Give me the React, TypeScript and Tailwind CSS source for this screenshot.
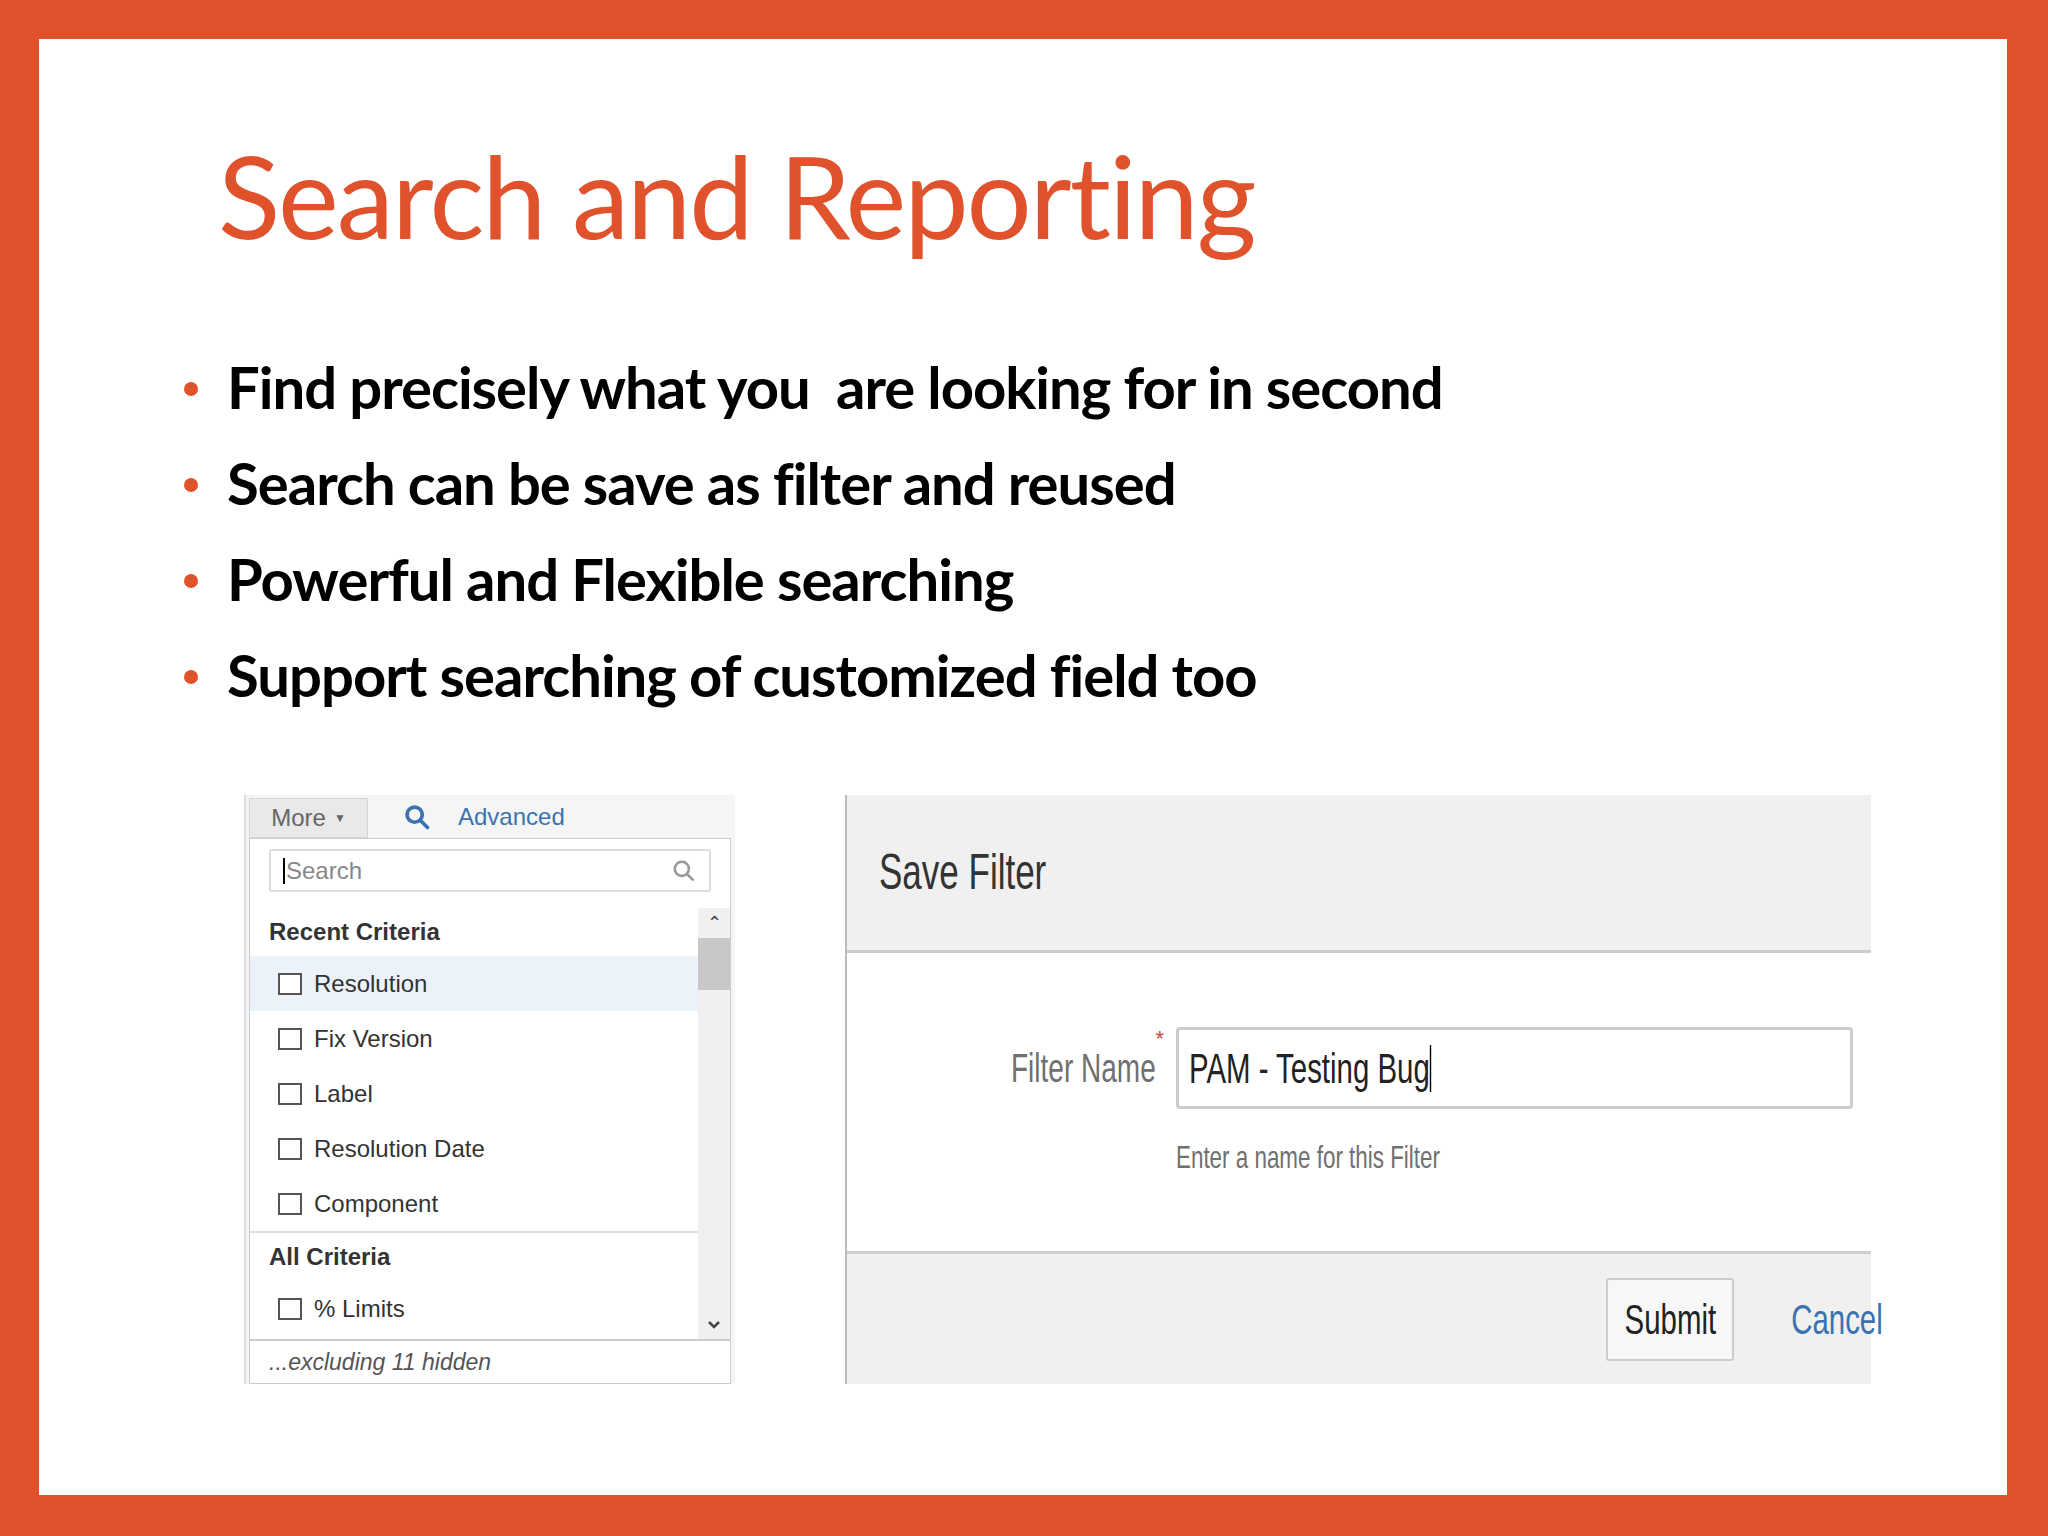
import React from "react";

const Check = () => <div className="w-[24px] h-[22px] border-2 border-[#555] bg-white shrink-0" />;

export default function App() {
  const rows = ["Fix Version", "Label", "Resolution Date", "Component"];
  return (
    <div className="w-[2048px] h-[1536px] bg-[#e0522c] pt-[39px] pl-[39px] pr-[41px] pb-[41px]">
      <div className="w-full h-full bg-white flex flex-col" >
        <div className="pt-[98px] pl-[179px] text-[#e0522c] text-[115px] leading-none tracking-[-2px]" style={{ fontFamily: "Lato, sans-serif" }}>
          Search and Reporting
        </div>
        <div className="mt-[86px] pl-[145px] flex flex-col" style={{ fontFamily: "Lato, sans-serif" }}>
          {["Find precisely what you  are looking for in second", "Search can be save as filter and reused", "Powerful and Flexible searching", "Support searching of customized field too"].map((t) => (
            <div key={t} className="h-[96px] flex items-center">
              <div className="w-[14px] h-[14px] rounded-full bg-[#e0522c] mr-[29px] mt-[6px]" />
              <span className="text-[58px] font-bold text-black whitespace-pre tracking-[-1px]">{t}</span>
            </div>
          ))}
        </div>
        <div className="mt-[73px] pl-[205px] flex gap-[110px]" style={{ fontFamily: "'Liberation Sans', Arial, sans-serif" }}>
          {/* left panel */}
          <div className="w-[491px] h-[589px] bg-[#f5f5f5] flex flex-col border-l-2 border-[#ddd]">
            <div className="h-[43px] flex items-end shrink-0">
              <div className="ml-[3px] w-[119px] h-[40px] bg-[#e9e9e9] border border-[#d5d5d5] flex items-center justify-center gap-2 text-[24px] text-[#666]">
                More <span className="text-[12px]">▼</span>
              </div>
              <div className="h-[43px] flex items-center ml-[35px]">
                <svg width="28" height="28" viewBox="0 0 24 24" fill="none" stroke="#3b73af" strokeWidth="3.2" strokeLinecap="round"><circle cx="10" cy="10" r="6.5" /><path d="M15 15l6 6" /></svg>
                <span className="ml-[27px] text-[24px] text-[#3b73af]">Advanced</span>
              </div>
            </div>
            <div className="ml-[3px] w-[482px] flex-1 bg-white border border-[#ccc] flex flex-col">
              <div className="px-[19px] pt-[10px]">
                <div className="h-[43px] border-2 border-[#ddd] rounded-[3px] flex items-center px-3 justify-between">
                  <span className="text-[24px] text-[#888] border-l-2 border-black pl-[1px] leading-[26px]">Search</span>
                  <svg width="26" height="26" viewBox="0 0 24 24" fill="none" stroke="#999" strokeWidth="2.4" strokeLinecap="round"><circle cx="10" cy="10" r="6.5" /><path d="M15 15l5 5" /></svg>
                </div>
              </div>
              <div className="flex flex-1 mt-[16px]">
                <div className="flex-1 flex flex-col">
                  <div className="h-[48px] flex items-center pl-[19px] text-[24px] font-bold text-[#333]">Recent Criteria</div>
                  <div className="h-[55px] bg-[#ebf2f9] flex items-center gap-[12px] pl-[28px] text-[24px] text-[#333]"><Check />Resolution</div>
                  {rows.map((r) => (
                    <div key={r} className="h-[55px] flex items-center gap-[12px] pl-[28px] text-[24px] text-[#333]"><Check />{r}</div>
                  ))}
                  <div className="border-t-2 border-[#ddd] h-[50px] flex items-center pl-[19px] text-[24px] font-bold text-[#333]">All Criteria</div>
                  <div className="h-[55px] flex items-center gap-[12px] pl-[28px] text-[24px] text-[#333]"><Check />% Limits</div>
                </div>
                <div className="w-[32px] bg-[#f0f0f0] flex flex-col items-center">
                  <span className="text-[#444] text-[18px] leading-[30px]">⌃</span>
                  <div className="w-full h-[52px] bg-[#c8c8c8]" />
                  <div className="flex-1" />
                  <svg width="16" height="16" viewBox="0 0 16 16" className="mb-[6px]"><path d="M3 5l5 5 5-5" fill="none" stroke="#444" strokeWidth="2.5" /></svg>
                </div>
              </div>
              <div className="border-t-2 border-[#ccc] h-[44px] flex items-center pl-[19px] text-[23px] italic text-[#555]">...excluding 11 hidden</div>
            </div>
          </div>
          {/* right panel */}
          <div className="w-[1026px] h-[589px] flex flex-col border-l-2 border-[#bbb]">
            <div className="h-[158px] bg-[#f0f0f0] border-b-[3px] border-[#ccc] flex items-center pl-[32px]">
              <span className="text-[50px] text-[#333] inline-block origin-left scale-x-[0.7]">Save Filter</span>
            </div>
            <div className="h-[301px] bg-white border-b-[3px] border-[#d0d0d0] flex flex-col">
              <div className="flex items-center mt-[74px]">
                <div className="w-[317px] flex justify-end">
                  <span className="text-[40px] text-[#707070] inline-block origin-right scale-x-[0.7]">Filter Name</span>
                  <span className="text-[#d04437] text-[22px] -mt-[16px]">*</span>
                </div>
                <div className="ml-[12px] w-[677px] h-[82px] border-[3px] border-[#ccc] rounded-[4px] flex items-center pl-[10px]">
                  <span className="text-[42px] text-[#222] inline-block origin-left scale-x-[0.7] whitespace-nowrap">PAM - Testing Bug<span className="border-r-2 border-black" /></span>
                </div>
              </div>
              <div className="ml-[317px] mt-[24px] text-[32px] text-[#707070] whitespace-nowrap"><span className="inline-block origin-left scale-x-[0.7] ml-[12px]">Enter a name for this Filter</span></div>
            </div>
            <div className="flex-1 bg-[#f0f0f0] flex items-center justify-end pr-[14px] gap-[18px]">
              <div className="w-[128px] h-[83px] bg-[#f7f7f7] border-2 border-[#ccc] rounded-[3px] flex items-center justify-center">
                <span className="text-[42px] text-[#222] inline-block scale-x-[0.7]">Submit</span>
              </div>
              <span className="text-[42px] text-[#3b73af] inline-block origin-right scale-x-[0.7] -mr-[26px]">Cancel</span>
            </div>
          </div>
        </div>
      </div>
    </div>
  );
}
